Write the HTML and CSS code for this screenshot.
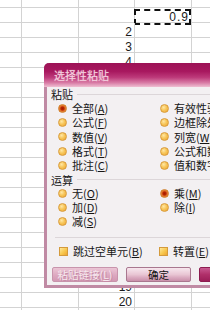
FILE: index.html
```html
<!DOCTYPE html>
<html lang="zh-CN">
<head>
<meta charset="utf-8">
<title>选择性粘贴</title>
<link rel="stylesheet" href="styles.css">
</head>
<body>
<div class="screen">
  <div class="sheet">
    <div class="row first"><span class="c"></span><span class="c"></span><span class="c"></span><span class="c"></span><span class="c"></span></div>
    <div class="row"><span class="c"></span><span class="c"></span><span class="c"></span><span class="c num marquee">0.9</span><span class="c"></span></div>
    <div class="row"><span class="c"></span><span class="c"></span><span class="c num">2</span><span class="c"></span><span class="c"></span></div>
    <div class="row"><span class="c"></span><span class="c"></span><span class="c num">3</span><span class="c"></span><span class="c"></span></div>
    <div class="row"><span class="c"></span><span class="c"></span><span class="c num">4</span><span class="c"></span><span class="c"></span></div>
    <div class="row"><span class="c"></span><span class="c"></span><span class="c"></span><span class="c"></span><span class="c"></span></div>
    <div class="row"><span class="c"></span><span class="c"></span><span class="c"></span><span class="c"></span><span class="c"></span></div>
    <div class="row"><span class="c"></span><span class="c"></span><span class="c"></span><span class="c"></span><span class="c"></span></div>
    <div class="row"><span class="c"></span><span class="c"></span><span class="c"></span><span class="c"></span><span class="c"></span></div>
    <div class="row"><span class="c"></span><span class="c"></span><span class="c"></span><span class="c"></span><span class="c"></span></div>
    <div class="row"><span class="c"></span><span class="c"></span><span class="c"></span><span class="c"></span><span class="c"></span></div>
    <div class="row"><span class="c"></span><span class="c"></span><span class="c"></span><span class="c"></span><span class="c"></span></div>
    <div class="row"><span class="c"></span><span class="c"></span><span class="c"></span><span class="c"></span><span class="c"></span></div>
    <div class="row"><span class="c"></span><span class="c"></span><span class="c"></span><span class="c"></span><span class="c"></span></div>
    <div class="row"><span class="c"></span><span class="c"></span><span class="c"></span><span class="c"></span><span class="c"></span></div>
    <div class="row"><span class="c"></span><span class="c"></span><span class="c"></span><span class="c"></span><span class="c"></span></div>
    <div class="row"><span class="c"></span><span class="c"></span><span class="c"></span><span class="c"></span><span class="c"></span></div>
    <div class="row"><span class="c"></span><span class="c"></span><span class="c"></span><span class="c"></span><span class="c"></span></div>
    <div class="row"><span class="c"></span><span class="c"></span><span class="c"></span><span class="c"></span><span class="c"></span></div>
    <div class="row"><span class="c"></span><span class="c"></span><span class="c num">19</span><span class="c"></span><span class="c"></span></div>
    <div class="row"><span class="c"></span><span class="c"></span><span class="c num">20</span><span class="c"></span><span class="c"></span></div>
    <div class="row"><span class="c"></span><span class="c"></span><span class="c"></span><span class="c"></span><span class="c"></span></div>
  </div>

  <div class="dialog">
    <div class="titlebar">选择性粘贴</div>
    <div class="body">
      <div class="legend"><span>粘贴</span></div>
      <div class="opts paste">
        <div class="opt"><span class="radio on"></span><span>全部(<u>A</u>)</span></div>
        <div class="opt"><span class="radio"></span><span>有效性验证(<u>N</u>)</span></div>
        <div class="opt"><span class="radio"></span><span>公式(<u>F</u>)</span></div>
        <div class="opt"><span class="radio"></span><span>边框除外(<u>X</u>)</span></div>
        <div class="opt"><span class="radio"></span><span>数值(<u>V</u>)</span></div>
        <div class="opt"><span class="radio"></span><span>列宽(<u>W</u>)</span></div>
        <div class="opt"><span class="radio"></span><span>格式(<u>T</u>)</span></div>
        <div class="opt"><span class="radio"></span><span>公式和数字格式(<u>R</u>)</span></div>
        <div class="opt"><span class="radio"></span><span>批注(<u>C</u>)</span></div>
        <div class="opt"><span class="radio"></span><span>值和数字格式(<u>U</u>)</span></div>
      </div>
      <div class="legend op"><span>运算</span></div>
      <div class="opts ops">
        <div class="opt"><span class="radio"></span><span>无(<u>O</u>)</span></div>
        <div class="opt"><span class="radio on"></span><span>乘(<u>M</u>)</span></div>
        <div class="opt"><span class="radio"></span><span>加(<u>D</u>)</span></div>
        <div class="opt"><span class="radio"></span><span>除(<u>I</u>)</span></div>
        <div class="opt"><span class="radio"></span><span>减(<u>S</u>)</span></div>
      </div>
      <div class="sep"></div>
      <div class="opts checks">
        <div class="opt"><span class="check"></span><span>跳过空单元(<u>B</u>)</span></div>
        <div class="opt"><span class="check"></span><span>转置(<u>E</u>)</span></div>
      </div>
      <div class="buttons">
        <span class="btn disabled">粘贴链接(<u>L</u>)</span>
        <span class="btn">确定</span>
        <span class="btn cancel">取消</span>
      </div>
    </div>
  </div>
</div>
</body>
</html>
```

FILE: styles.css
```css
html, body {
  margin: 0;
  padding: 0;
  background: #ffffff;
}

.screen {
  position: relative;
  width: 210px;
  height: 310px;
  overflow: hidden;
  font-family: "Liberation Sans", "Noto Sans CJK SC", sans-serif;
}

/* spreadsheet grid */
.sheet {
  display: flex;
  flex-direction: column;
}

.row {
  display: grid;
  grid-template-columns: 22px 57px 56px 57px 1fr;
  height: 15px;
  box-sizing: border-box;
  border-bottom: 1px solid #d3d3d3;
  flex: none;
}

.row.first {
  height: 8px;
}

.c {
  display: flex;
  align-items: flex-end;
  justify-content: flex-end;
  box-sizing: border-box;
  border-right: 1px solid #d3d3d3;
  position: relative;
}

.c:last-child {
  border-right: none;
}

.num {
  font-size: 12px;
  line-height: 9px;
  color: #1a1a1a;
  padding-right: 2px;
}

.marquee {
  letter-spacing: 1px;
  padding-right: 2px;
}

.marquee::after {
  content: "";
  position: absolute;
  left: -1px;
  right: 0;
  top: 1px;
  bottom: -3px;
  border: 2px dashed #111;
}

/* dialog */
.dialog {
  position: absolute;
  left: 44px;
  top: 63px;
  width: 200px;
  height: 225px;
  box-sizing: border-box;
  border-left: 3px solid #c08aa4;
  border-bottom: 3px solid #c08aa4;
  border-radius: 5px 0 0 0;
  background: #f3f0f2;
  display: flex;
  flex-direction: column;
  font-family: "Noto Sans CJK SC", "Noto Sans CJK JP", sans-serif;
  font-size: 11px;
  color: #151515;
}

.titlebar {
  height: 24px;
  margin-left: -3px;
  padding-left: 10px;
  border-radius: 5px 0 0 0;
  background: linear-gradient(to bottom, #9c1256 0%, #a8185f 35%, #bd3a7a 60%, #d87aa4 82%, #efbfd2 100%);
  color: #f3d0df;
  text-shadow: 0 0 1px #e8a0c0;
  font-size: 11px;
  line-height: 25px;
  flex: none;
}

.body {
  flex: 1;
  display: flex;
  flex-direction: column;
}

.legend {
  display: flex;
  align-items: center;
  height: 14px;
  padding-left: 4px;
  line-height: 14px;
  flex: none;
}

.legend::after {
  content: "";
  flex: 1;
  height: 1px;
  margin-left: 4px;
  background: #dcd6d9;
}

.legend.op {
  height: 13px;
  margin-top: 1px;
}

.opts {
  display: grid;
  grid-template-columns: 102px 1fr;
  padding-left: 11px;
  flex: none;
}

.paste {
  grid-auto-rows: 14.3px;
}

.ops {
  grid-auto-rows: 14px;
}

.checks {
  grid-auto-rows: 14px;
  margin-top: 6px;
  padding-left: 12px;
  grid-template-columns: 100px 1fr;
}

.opt {
  display: flex;
  align-items: center;
  gap: 5px;
  white-space: nowrap;
  line-height: 14px;
}

.opt u {
  text-decoration: underline;
  text-underline-offset: 1px;
}

.radio {
  width: 9px;
  height: 9px;
  box-sizing: border-box;
  border-radius: 50%;
  border: 1px solid #d99c3c;
  background: radial-gradient(circle at 38% 35%, #ffe7a6 0, #f7c65a 45%, #eea331 100%);
  flex: none;
}

.radio.on {
  border-color: #d0802c;
  background: radial-gradient(circle, #a51a00 0, #b82800 1.6px, #e06a28 2.6px, #f2a844 100%);
}

.check {
  width: 9px;
  height: 9px;
  box-sizing: border-box;
  border: 1px solid #d49a3c;
  background: linear-gradient(135deg, #ffe89a 0%, #f8c74e 55%, #eea532 100%);
  flex: none;
}

.sep {
  height: 1px;
  margin-top: 9px;
  margin-left: 8px;
  background: #dcd6d9;
  flex: none;
}

.buttons {
  display: flex;
  gap: 8px;
  margin-top: 9px;
  padding-left: 5px;
  flex: none;
}

.btn {
  display: flex;
  align-items: center;
  justify-content: center;
  width: 65px;
  height: 15px;
  box-sizing: border-box;
  border: 1px solid #a9778f;
  border-radius: 2px;
  background: linear-gradient(to bottom, #f7e7ee 0%, #e9c6d4 50%, #d9a8be 75%, #c990aa 100%);
  font-size: 10.5px;
  line-height: 13px;
  color: #111;
  white-space: nowrap;
  flex: none;
}

.btn.disabled {
  width: 66px;
  border-color: #c894ac;
  background: linear-gradient(to bottom, #ebc5d5 0%, #dda8c0 55%, #d398b3 100%);
  color: #f6e8ee;
  text-shadow: 1px 1px 0 #c58aa5;
}

.btn.cancel {
  border-color: #8c1c50;
  background: linear-gradient(to bottom, #c85890 0%, #b0306a 50%, #9c1e58 100%);
  color: #fff;
}
```
